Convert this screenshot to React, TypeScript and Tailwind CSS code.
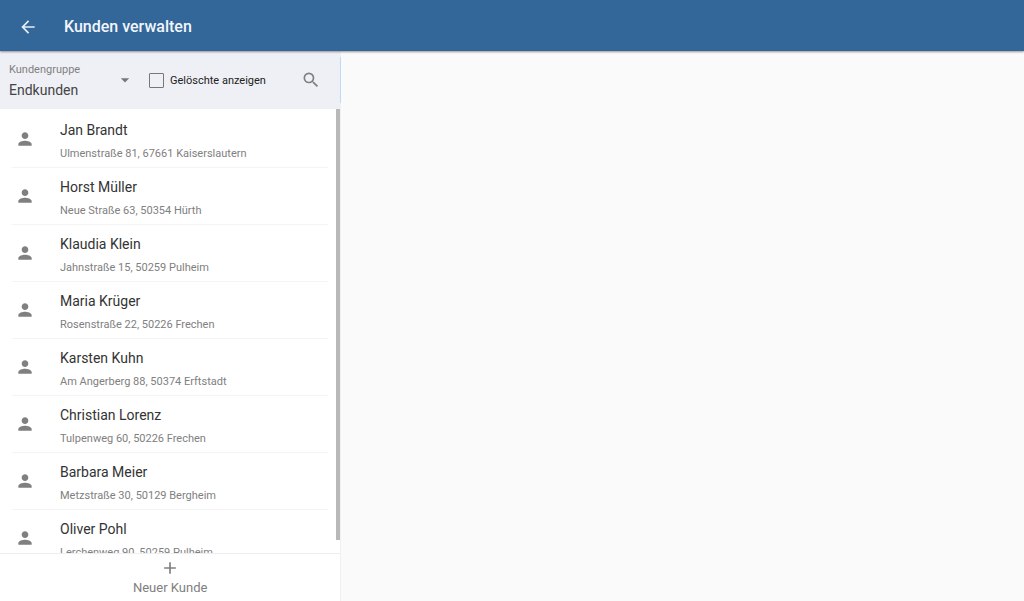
import { MdAdd, MdArrowBack, MdArrowDropDown, MdPerson, MdSearch } from "react-icons/md";

interface Customer {
  name: string;
  address: string;
}

const customers: Customer[] = [
  { name: "Jan Brandt", address: "Ulmenstraße 81, 67661 Kaiserslautern" },
  { name: "Horst Müller", address: "Neue Straße 63, 50354 Hürth" },
  { name: "Klaudia Klein", address: "Jahnstraße 15, 50259 Pulheim" },
  { name: "Maria Krüger", address: "Rosenstraße 22, 50226 Frechen" },
  { name: "Karsten Kuhn", address: "Am Angerberg 88, 50374 Erftstadt" },
  { name: "Christian Lorenz", address: "Tulpenweg 60, 50226 Frechen" },
  { name: "Barbara Meier", address: "Metzstraße 30, 50129 Bergheim" },
  { name: "Oliver Pohl", address: "Lerchenweg 90, 50259 Pulheim" },
];

function Header() {
  return (
    <header className="relative z-10 flex h-[51px] shrink-0 items-center gap-[26px] bg-[#336699] px-[18px] pt-[2px] text-white shadow-[0_1px_2px_rgba(0,0,0,0.4)]">
      <button aria-label="Zurück" className="text-[#e6eef5]">
        <MdArrowBack size={20} />
      </button>
      <h1 className="text-base font-medium text-[#f2f6fa]">Kunden verwalten</h1>
    </header>
  );
}

function FilterBar() {
  return (
    <div className="relative flex h-[58px] shrink-0 items-center bg-[#eff0f6] pr-[19px] pl-[9px]">
      <div className="relative w-[126px] pt-1">
        <label htmlFor="group" className="block text-[11px] leading-4 text-[#808080]">
          Kundengruppe
        </label>
        <select id="group" className="block h-6 w-full appearance-none bg-transparent text-sm text-[#444]">
          <option>Endkunden</option>
        </select>
        <MdArrowDropDown size={20} className="pointer-events-none absolute top-3 right-0 text-[#777]" />
      </div>

      <label className="ml-[14px] flex items-center gap-[6px] text-[11px] text-[#222]">
        <input
          type="checkbox"
          className="size-[15px] appearance-none rounded-[1px] border border-[#777] checked:bg-[#336699]"
        />
        <span className="pt-[2px]">Gelöschte anzeigen</span>
      </label>

      <button aria-label="Suchen" className="ml-auto text-[#808080]">
        <MdSearch size={20} />
      </button>

      {/* Pane edge highlight */}
      <div className="absolute inset-y-[6px] -right-px w-px bg-[#b9dcf8]" />
    </div>
  );
}

function CustomerRow({ name, address }: Customer) {
  return (
    <li className="border-b border-[#f4f4f4]">
      <button className="flex h-14 w-full items-center gap-[22px] text-left">
        <span className="flex w-[26px] justify-center text-[#808080]">
          <MdPerson size={20} />
        </span>
        <span className="min-w-0 flex-1 pt-[6px]">
          <span className="block truncate text-sm leading-6 text-[#333]">{name}</span>
          <span className="block truncate text-[11px] leading-6 text-[#808080]">{address}</span>
        </span>
      </button>
    </li>
  );
}

export default function App() {
  return (
    <div className="flex h-screen flex-col bg-[#fafafa] font-[Roboto,sans-serif]">
      <Header />

      <div className="flex min-h-0 flex-1">
        <aside className="flex w-1/3 flex-col border-r border-[#f0f0f0] bg-white">
          <FilterBar />

          {/* Customer list */}
          <div className="relative min-h-0 flex-1">
            <ul className="h-full overflow-y-auto px-3 pt-[2px] [scrollbar-width:none]">
              {customers.map((customer) => (
                <CustomerRow key={customer.name} {...customer} />
              ))}
            </ul>
            {/* Scroll thumb */}
            <div className="absolute top-0 right-0 h-[97%] w-1 bg-[#b8b8b8]" />
          </div>

          <button className="flex h-12 shrink-0 flex-col items-center border-t border-[#eeeeee] pt-1 text-[#808080]">
            <MdAdd size={20} />
            <span className="text-[13px] leading-5">Neuer Kunde</span>
          </button>
        </aside>

        <main className="flex-1" />
      </div>
    </div>
  );
}
